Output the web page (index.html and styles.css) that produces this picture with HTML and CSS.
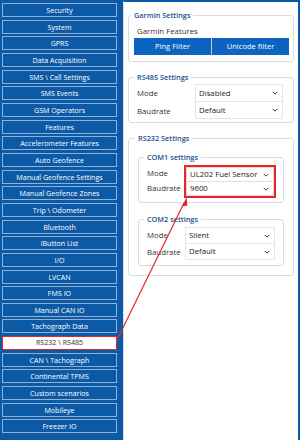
FILE: index.html
```html
<!DOCTYPE html>
<html lang="en">
<head>
    <meta charset="UTF-8">
    <title>RS232 \ RS485</title>
    <link rel="stylesheet" href="styles.css">
</head>
<body>
    <div class="page">
        <nav class="menu">
            <div class="item">Security</div>
            <div class="item">System</div>
            <div class="item">GPRS</div>
            <div class="item">Data Acquisition</div>
            <div class="item">SMS \ Call Settings</div>
            <div class="item">SMS Events</div>
            <div class="item">GSM Operators</div>
            <div class="item">Features</div>
            <div class="item">Accelerometer Features</div>
            <div class="item">Auto Geofence</div>
            <div class="item">Manual Geofence Settings</div>
            <div class="item">Manual Geofence Zones</div>
            <div class="item">Trip \ Odometer</div>
            <div class="item">Bluetooth</div>
            <div class="item">iButton List</div>
            <div class="item">I/O</div>
            <div class="item">LVCAN</div>
            <div class="item">FMS IO</div>
            <div class="item">Manual CAN IO</div>
            <div class="item">Tachograph Data</div>
            <div class="item active">RS232 \ RS485</div>
            <div class="item">CAN \ Tachograph</div>
            <div class="item">Continental TPMS</div>
            <div class="item">Custom scenarios</div>
            <div class="item">Mobileye</div>
            <div class="item">Freezer IO</div>
        </nav>

        <main class="panel">
            <fieldset class="group garmin">
                <legend>Garmin Settings</legend>
                <div class="caption">Garmin Features</div>
                <div class="tabs">
                    <div class="tab">Ping Filter</div>
                    <div class="tab">Unicode filter</div>
                </div>
            </fieldset>

            <fieldset class="group rs485">
                <legend>RS485 Settings</legend>
                <div class="form">
                    <div class="labels">
                        <span>Mode</span>
                        <span>Baudrate</span>
                    </div>
                    <div class="fields">
                        <div class="select">Disabled<svg viewBox="0 0 8 5"><path d="M1 1l3 3 3-3"/></svg></div>
                        <div class="select">Default<svg viewBox="0 0 8 5"><path d="M1 1l3 3 3-3"/></svg></div>
                    </div>
                </div>
            </fieldset>

            <fieldset class="group rs232">
                <legend>RS232 Settings</legend>
                <fieldset class="group com com1">
                    <legend>COM1 settings</legend>
                    <div class="form">
                        <div class="labels">
                            <span>Mode</span>
                            <span>Baudrate</span>
                        </div>
                        <div class="fields marked">
                            <div class="select">UL202 Fuel Sensor<svg viewBox="0 0 8 5"><path d="M1 1l3 3 3-3"/></svg></div>
                            <div class="select">9600<svg viewBox="0 0 8 5"><path d="M1 1l3 3 3-3"/></svg></div>
                        </div>
                    </div>
                </fieldset>
                <fieldset class="group com com2">
                    <legend>COM2 settings</legend>
                    <div class="form">
                        <div class="labels">
                            <span>Mode</span>
                            <span>Baudrate</span>
                        </div>
                        <div class="fields">
                            <div class="select">Silent<svg viewBox="0 0 8 5"><path d="M1 1l3 3 3-3"/></svg></div>
                            <div class="select">Default<svg viewBox="0 0 8 5"><path d="M1 1l3 3 3-3"/></svg></div>
                        </div>
                    </div>
                </fieldset>
            </fieldset>
        </main>

        <!-- annotation arrow from the menu item to the highlighted fields -->
        <svg class="arrow" viewBox="0 0 300 440" width="300" height="440">
            <line x1="117" y1="340" x2="184" y2="203"/>
            <path d="M186.5 197 L182 206.5 L187.5 205.5 Z"/>
        </svg>
    </div>
</body>
</html>
```

FILE: styles.css
```css
* {
    margin: 0;
    padding: 0;
    box-sizing: border-box;
}
html, body {
    width: 300px;
    height: 440px;
    overflow: hidden;
    background: #fff;
    font-family: "Open Sans", "Noto Sans", sans-serif;
}

.page {
    display: flex;
    height: 440px;
    position: relative;
}

.menu {
    width: 123px;
    flex: none;
    background: #0c5aa6;
    padding: 3px 6px 0 2px;
    display: flex;
    flex-direction: column;
    gap: 2.67px;
}
.menu .item {
    height: 14px;
    border: 1px solid #8eb1d8;
    color: #fff;
    font-size: 7.1px;
    font-weight: 400;
    line-height: 12px;
    text-align: center;
    white-space: nowrap;
}
.menu .item.active {
    background: #fff;
    color: #333;
    border: 1.5px solid #e8262a;
    line-height: 11px;
}

.panel {
    flex: 1;
    border-top: 2px solid #0c5aa6;
    border-right: 2px solid #0c5aa6;
    border-left: 1px dotted #a9c0da;
    padding: 8px 4px 0 4px;
}

.group {
    border: 1px solid #d6dde4;
    border-radius: 3px;
    padding: 0 5px 0 8px;
    min-width: 0;
}
.group legend {
    font-size: 7.3px;
    font-weight: 600;
    color: #20518f;
    padding: 0 3px;
    margin-left: -3px;
    line-height: 10px;
}

.garmin {
    padding: 6px 4px 6px 5px;
    margin-bottom: 10px;
}
.garmin .caption {
    font-size: 7.8px;
    color: #333;
    line-height: 10px;
    margin: 0 0 2px 3px;
}
.tabs {
    display: flex;
    gap: 1px;
    background: #c8ccd0;
}
.tab {
    flex: 1;
    height: 17px;
    background: #0c63c0;
    color: #fff;
    font-size: 7.6px;
    line-height: 17px;
    text-align: center;
}

.form {
    display: grid;
    grid-template-columns: 58px 1fr;
}
.labels {
    display: flex;
    flex-direction: column;
}
.labels span {
    font-size: 7.8px;
    color: #333;
}
.fields {
    display: flex;
    flex-direction: column;
}
.select {
    border: 1px solid #e2e6ea;
    margin-top: -1px;
    padding: 0 4px 0 3px;
    display: flex;
    align-items: center;
    justify-content: space-between;
    font-size: 7.8px;
    color: #222;
}
.select:first-child {
    margin-top: 0;
}
.select svg {
    width: 6px;
    height: 4px;
    fill: none;
    stroke: #333;
    stroke-width: 1.3;
}

.rs485 {
    margin-bottom: 10px;
}
.rs485 .form {
    padding: 2px 5px 2px 0;
}
.rs485 .labels span,
.rs485 .select {
    height: 18px;
    line-height: 18px;
}

.rs232 {
    padding: 9px 9px 9px 9px;
}
.com {
    padding: 0 4px 0 8px;
}
.com .form {
    grid-template-columns: 38px 1fr;
}
.com1 .form {
    padding: 4px 4px 5px 0;
}
.com1 .labels span,
.com1 .select {
    height: 15px;
    line-height: 15px;
}
.com2 {
    margin-top: 11px;
}
.com2 .form {
    padding: 3px 4px 4px 0;
}
.com2 .labels span,
.com2 .select {
    height: 17px;
    line-height: 17px;
}
.fields.marked {
    border: 2px solid #e8262a;
    margin: -1px -1px -1px -1px;
}
.fields.marked .select {
    border-color: #f0d6d6;
}

.arrow {
    position: absolute;
    left: 0;
    top: 0;
    pointer-events: none;
}
.arrow line {
    stroke: #e8262a;
    stroke-width: 1.2;
}
.arrow path {
    fill: #e8262a;
}
```
